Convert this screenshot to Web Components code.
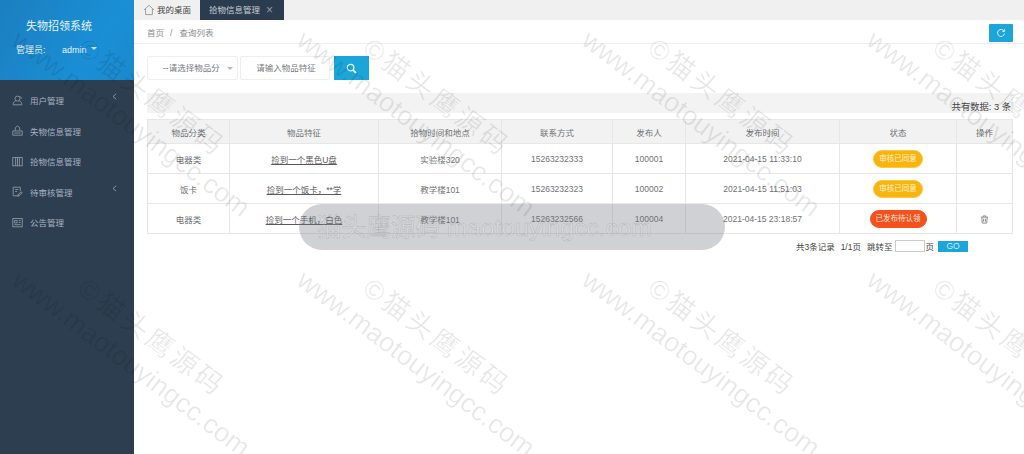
<!DOCTYPE html>
<html lang="zh">
<head>
<meta charset="utf-8">
<title>失物招领系统</title>
<style>
  html, body { margin: 0; height: 100%; overflow: hidden; background: #fff; }
  body { font: 8.5px "Liberation Sans", "Noto Sans CJK SC", sans-serif; color: #676a6c; }
</style>
</head>
<body>
<app-shell>
  <side-bar slot="side"></side-bar>
  <tab-bar></tab-bar>
  <crumb-bar></crumb-bar>
  <search-form></search-form>
  <count-bar></count-bar>
  <data-table></data-table>
  <pager-bar></pager-bar>
</app-shell>
<toast-msg></toast-msg>
<water-mark></water-mark>

<script>
class AppShell extends HTMLElement {
  constructor() {
    super();
    this.attachShadow({ mode: 'open' }).innerHTML = `
      <style>
        :host { display: flex; width: 1024px; height: 454px; overflow: hidden; }
        main { flex: 1; min-width: 0; display: flex; flex-direction: column; }
      </style>
      <slot name="side"></slot>
      <main><slot></slot></main>
    `;
  }
}

// menu icons, stroked on a 14x14 box
const MENU_ICONS = {
  user: '<circle cx="7" cy="4.6" r="3.2"/><path d="M4.8 7.4C3 8 1.6 9.6 1.5 12.5h11c-.1-2.9-1.5-4.5-3.3-5.1"/><path d="M9.6 2c1.4.3 2.6 1 2.9 2.6"/>',
  upload: '<path d="M4.2 7V3.4L7 1.2l2.8 2.2V7"/><path d="M1 7.5h12v5.5H1z"/><path d="M3 10.2h8"/>',
  cols: '<rect x="1" y="2" width="12" height="10.5"/><path d="M4.6 2v10.5M7 2v10.5M9.4 2v10.5"/>',
  edit: '<path d="M9.5 12.5h-8v-11h9v5"/><path d="M4 4.5h4M4 7h2.5"/><path d="M7.5 13l.4-2.4 4-3.2 1.2 1.4-4 3.2z"/>',
  news: '<rect x="1" y="2" width="12" height="10.5"/><path d="M3 4.5h3.5v3H3zM8.5 4.5H11M8.5 7H11M3 9.8h8"/>'
};

class SideBar extends HTMLElement {
  constructor() {
    super();
    const items = [
      ['user', '用户管理', true],
      ['upload', '失物信息管理', false],
      ['cols', '拾物信息管理', false],
      ['edit', '待审核管理', true],
      ['news', '公告管理', false]
    ];
    const rows = items.map(([icon, text, more]) => `
      <li>
        <svg viewBox="0 0 14 14" width="11" height="11">${MENU_ICONS[icon]}</svg>
        <span>${text}</span>
        ${more ? '<svg class="arrow" viewBox="0 0 6 8" width="5" height="7"><path d="M5 .8 1.2 4 5 7.2"/></svg>' : ''}
      </li>`).join('');
    this.attachShadow({ mode: 'open' }).innerHTML = `
      <style>
        :host { display: block; width: 134px; flex: none; background: #2d3e50; color: #a7b1c2; }
        .head {
          height: 80px; box-sizing: border-box; padding-top: 19px;
          background: linear-gradient(120deg, #1b7fbf, #1a8fd6 70%, #1c88cc);
          color: #e4f1fa;
        }
        .title { font-size: 11px; line-height: 15px; padding-left: 26px; }
        .who { display: flex; margin-top: 10px; padding-left: 16px; line-height: 12px; font-size: 9px; }
        .who b { font-weight: normal; width: 46px; }
        .who i { font-style: normal; }
        .caret { width: 0; height: 0; margin: 3px 0 0 4px; border: 3.5px solid transparent; border-top-color: #d3e8f6; border-bottom: 0; }
        ul { list-style: none; margin: 0; padding: 5px 0 0; }
        li { position: relative; display: flex; align-items: center; height: 30.5px; padding-left: 12px; }
        li svg { flex: none; fill: none; stroke: #8e9aa8; stroke-width: 1.1; }
        li span { margin-left: 7px; }
        li .arrow { position: absolute; left: 112px; top: 8px; }
      </style>
      <div class="head">
        <div class="title">失物招领系统</div>
        <div class="who"><b>管理员:</b><i>admin</i><div class="caret"></div></div>
      </div>
      <ul>${rows}</ul>
    `;
  }
}

class TabBar extends HTMLElement {
  constructor() {
    super();
    this.attachShadow({ mode: 'open' }).innerHTML = `
      <style>
        :host { display: flex; height: 20px; background: #f0f0f0; line-height: 20px; color: #444; }
        .home { width: 66px; display: flex; align-items: center; padding-left: 9px; box-sizing: border-box; }
        .home svg { margin-right: 2px; fill: none; stroke: #8a8a8a; stroke-width: .8; }
        .on { width: 84px; box-sizing: border-box; padding-left: 9px; background: #2b3c4e; color: #c6ced6; position: relative; }
        .on span { position: absolute; left: 66px; color: #8f9ba7; font-size: 12px; }
      </style>
      <div class="home">
        <svg viewBox="0 0 12 12" width="12" height="12"><path d="M1 6 6 1.3 11 6M2.6 5v5.6h6.8V5"/></svg>
        我的桌面
      </div>
      <div class="on">拾物信息管理<span>×</span></div>
    `;
  }
}

class CrumbBar extends HTMLElement {
  constructor() {
    super();
    this.attachShadow({ mode: 'open' }).innerHTML = `
      <style>
        :host { display: flex; justify-content: space-between; align-items: center; height: 24px; box-sizing: border-box; padding: 0 11px 0 13px; border-bottom: 1px solid #eee; color: #8b8e90; }
        i { font-style: normal; margin: 0 7px 0 6px; }
        button { width: 24px; height: 18px; margin-top: 3px; padding: 0; border: 0; border-radius: 1px; background: #1ba5d8; display: flex; align-items: center; justify-content: center; }
        svg { fill: none; stroke: #d7f0fa; stroke-width: 1.2; }
      </style>
      <div>首页<i>/</i>查询列表</div>
      <button aria-label="刷新"><svg viewBox="0 0 12 12" width="10" height="10"><path d="M9.8 4A4.2 4.2 0 1 0 10.2 6.8"/><path d="M7.6 4.2h2.7V1.5"/></svg></button>
    `;
  }
}

class SearchForm extends HTMLElement {
  constructor() {
    super();
    this.attachShadow({ mode: 'open' }).innerHTML = `
      <style>
        :host { display: flex; height: 24px; margin: 12px 0 0 13px; }
        .box { height: 24px; box-sizing: border-box; border: 1px solid #eee; border-radius: 2px; line-height: 22px; color: #767a7d; background: #fff; }
        .sel { width: 91px; padding-left: 15px; position: relative; }
        .sel u { position: absolute; left: 79px; top: 9.5px; width: 0; height: 0; border: 3px solid transparent; border-top-color: #bbb; border-bottom: 0; }
        .inp { width: 90px; margin-left: 2px; padding-left: 2px; text-align: center; }
        button { width: 35px; height: 24px; margin-left: 4px; padding: 0; border: 0; background: #1ba5d8; display: flex; align-items: center; justify-content: center; }
        svg { fill: none; stroke: #e6f6fc; stroke-width: 1.3; }
      </style>
      <div class="box sel">--请选择物品分<u></u></div>
      <div class="box inp">请输入物品特征</div>
      <button aria-label="搜索"><svg viewBox="0 0 12 12" width="11" height="11"><circle cx="5" cy="5" r="3.6"/><path d="m7.8 7.8 3.2 3.2" stroke-width="2"/></svg></button>
    `;
  }
}

class CountBar extends HTMLElement {
  constructor() {
    super();
    this.attachShadow({ mode: 'open' }).innerHTML = `
      <style>
        :host { display: block; height: 20px; margin: 13px 11px 0 13px; padding: 8px 2px 0 0; box-sizing: border-box; background: #f3f3f3; text-align: right; color: #444; font-size: 9.3px; line-height: 12px; }
      </style>
      共有数据: 3 条
    `;
  }
}

class StatusBadge extends HTMLElement {
  constructor() {
    super();
    this.attachShadow({ mode: 'open' }).innerHTML = `
      <style>
        :host { display: inline-block; height: 18px; box-sizing: border-box; padding: 0 5px; border: 1px solid #fdc938; border-radius: 9px; background: #f9b40f; color: #fff3d0; font-size: 7.5px; line-height: 16px; vertical-align: middle; }
        :host([kind="red"]) { border-color: #f4511e; background: #f4511e; color: #ffe4da; }
      </style>
      <slot></slot>
    `;
  }
}

class DataTable extends HTMLElement {
  constructor() {
    super();
    const widths = [82, 149, 123, 111, 73, 154, 117, 56];
    const heads = ['物品分类', '物品特征', '拾物时间和地点', '联系方式', '发布人', '发布时间', '状态', '操作'];
    const trash = '<svg viewBox="0 0 10 10" width="9" height="9"><path d="M1 2.4h8M3.6 2.2V1h2.8v1.2M2 2.6l.5 6.4h5L8 2.6M4 4v3.5M6 4v3.5"/></svg>';
    const rows = [
      ['电器类', '捡到一个黑色U盘', '实验楼320', '15263232333', '100001', '2021-04-15 11:33:10', '', '审核已同意', ''],
      ['饭卡', '捡到一个饭卡，**学', '教学楼101', '15263232323', '100002', '2021-04-15 11:51:03', '', '审核已同意', ''],
      ['电器类', '捡到一个手机，白色', '教学楼101', '15263232566', '100004', '2021-04-15 23:18:57', 'red', '已发布待认领', trash]
    ];
    const body = rows.map(r => `
      <tr>
        <td>${r[0]}</td>
        <td><u>${r[1]}</u></td>
        <td>${r[2]}</td>
        <td>${r[3]}</td>
        <td>${r[4]}</td>
        <td>${r[5]}</td>
        <td><status-badge kind="${r[6]}">${r[7]}</status-badge></td>
        <td>${r[8]}</td>
      </tr>`).join('');
    this.attachShadow({ mode: 'open' }).innerHTML = `
      <style>
        :host { display: block; margin: 6px 11px 0 13px; }
        table { width: 865px; table-layout: fixed; border-collapse: collapse; text-align: center; color: #707375; }
        th, td { padding: 0; border: 1px solid #e7e7e7; }
        th { height: 24px; box-sizing: border-box; font-weight: normal; background: #f2f2f2; }
        td { height: 30px; box-sizing: border-box; background: #fff; }
        u { color: #5a5a5a; }
        svg { fill: none; stroke: #777; stroke-width: .9; vertical-align: middle; }
      </style>
      <table>
        <colgroup>${widths.map(w => `<col style="width:${w}px">`).join('')}</colgroup>
        <thead><tr>${heads.map(h => `<th>${h}</th>`).join('')}</tr></thead>
        <tbody>${body}</tbody>
      </table>
    `;
  }
}

class PagerBar extends HTMLElement {
  constructor() {
    super();
    this.attachShadow({ mode: 'open' }).innerHTML = `
      <style>
        :host { display: flex; justify-content: flex-end; align-items: center; height: 12px; margin: 6px 56px 0 0; color: #444; }
        span { margin-right: 6px; }
        .box { width: 30px; height: 12px; box-sizing: border-box; margin: 0 0 0 -3px; border: 1px solid #ccc; background: #fff; }
        button { width: 30px; height: 11px; margin-left: 4px; padding: 0; border: 0; background: #1ba5d8; color: #cdeefa; font: 8.5px "Liberation Sans", sans-serif; }
      </style>
      <span>共3条记录</span><span>1/1页</span><span>跳转至</span><div class="box"></div>页<button>GO</button>
    `;
  }
}

class ToastMsg extends HTMLElement {
  constructor() {
    super();
    this.attachShadow({ mode: 'open' }).innerHTML = `
      <style>
        :host { position: absolute; left: 299px; top: 204px; width: 426px; height: 46px; box-sizing: border-box; padding-left: 18px; border-radius: 23px; background: rgba(110, 114, 124, .33); color: rgba(255, 255, 255, .16); font-size: 24.6px; line-height: 48px; white-space: nowrap; pointer-events: none; -webkit-text-stroke: .5px rgba(90, 90, 100, .28); }
      </style>
      猫头鹰源码 maotouyingcc.com
    `;
  }
}

class WaterMark extends HTMLElement {
  constructor() {
    super();
    let marks = '';
    for (let row = 0; row < 2; row++) {
      for (let col = 0; col < 4; col++) {
        const x = 15 + col * 285;
        const y = 37 + row * 240;
        marks += `<span class="url" style="left:${x}px;top:${y}px">www.maotouyingcc.com</span>`;
        marks += `<span class="own" style="left:${x + 66}px;top:${y + 8}px">©猫头鹰源码</span>`;
      }
    }
    this.attachShadow({ mode: 'open' }).innerHTML = `
      <style>
        :host { position: absolute; left: 0; top: 0; width: 1024px; height: 454px; overflow: hidden; pointer-events: none; }
        span { position: absolute; white-space: nowrap; color: rgba(0, 0, 0, .09); line-height: 1; transform-origin: 0 50%; transform: translateY(-50%) rotate(37deg); }
        .url { font-size: 27px; }
        .own { font-size: 27px; letter-spacing: 3.5px; }
      </style>
      ${marks}
    `;
  }
}

customElements.define('app-shell', AppShell);
customElements.define('side-bar', SideBar);
customElements.define('tab-bar', TabBar);
customElements.define('crumb-bar', CrumbBar);
customElements.define('search-form', SearchForm);
customElements.define('count-bar', CountBar);
customElements.define('status-badge', StatusBadge);
customElements.define('data-table', DataTable);
customElements.define('pager-bar', PagerBar);
customElements.define('toast-msg', ToastMsg);
customElements.define('water-mark', WaterMark);
</script>
</body>
</html>
